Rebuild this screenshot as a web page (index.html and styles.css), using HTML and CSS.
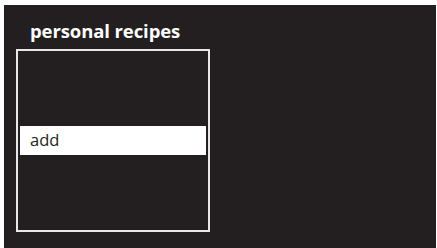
FILE: index.html
```html
<!DOCTYPE html>
<html>
<head>
<meta charset="utf-8">
<link rel="stylesheet" href="styles.css">
</head>
<body>
<div class="screen">
  <h1 class="title">personal recipes</h1>
  <div class="list">
    <div class="item">add</div>
  </div>
</div>
</body>
</html>
```
FILE: styles.css
```css
html, body {
  margin: 0;
  padding: 0;
  background: #ffffff;
}
body {
  width: 437px;
  height: 248px;
  overflow: hidden;
}
.screen {
  margin: 5px 1px 0 4px;
  height: 243px;
  background: #231f20;
  padding: 0 0 0 12px;
  box-sizing: border-box;
  display: flex;
  flex-direction: column;
  font-family: "Open Sans", "Liberation Sans", sans-serif;
}
.title {
  margin: 0;
  padding: 15px 0 0 14px;
  height: 44px;
  box-sizing: border-box;
  font-size: 18.5px;
  line-height: 22px;
  font-weight: 700;
  color: #ffffff;
  letter-spacing: -0.1px;
}
.list {
  width: 194px;
  height: 183px;
  box-sizing: border-box;
  border: 2px solid #e8e8e8;
  padding: 75px 2px 0 2px;
}
.item {
  height: 29px;
  background: #ffffff;
  color: #231f20;
  font-size: 16.5px;
  line-height: 28px;
  padding-left: 10px;
}
```
